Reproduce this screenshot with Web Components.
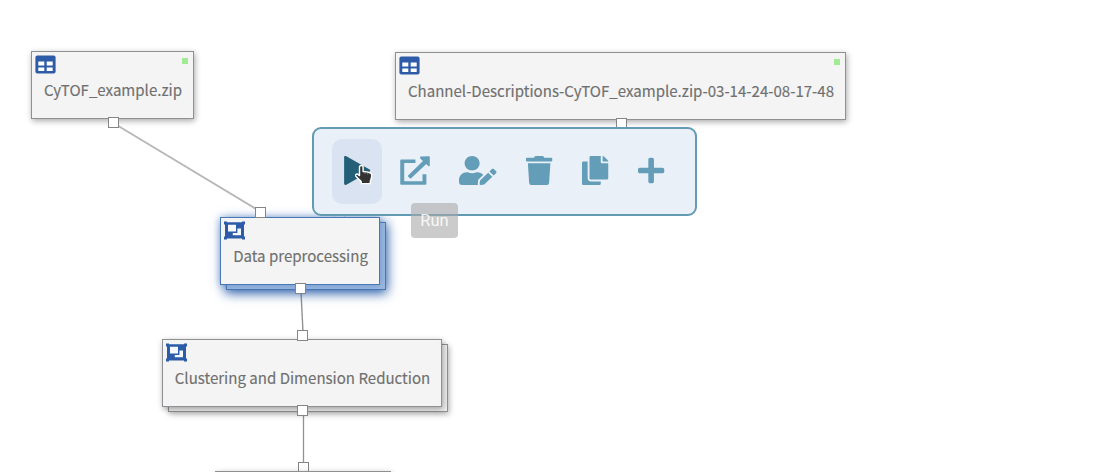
<!DOCTYPE html>
<html lang="en">
<head>
<meta charset="utf-8">
<title>Workflow</title>
<style>
html,body{margin:0;height:100%;overflow:hidden;background:#fff}
</style>
</head>
<body>
<workflow-canvas>
  <workflow-edges></workflow-edges>
  <workflow-node kind="table" status="ready" style="left:31px;top:51px;width:163px">CyTOF_example.zip</workflow-node>
  <workflow-node kind="table" status="ready" style="left:395px;top:52px;width:451px">Channel-Descriptions-CyTOF_example.zip-03-14-24-08-17-48</workflow-node>
  <workflow-port style="left:334px;top:213px;border-color:#dcdccf"></workflow-port>
  <workflow-node kind="group" selected style="left:220px;top:217px;width:160px">Data preprocessing</workflow-node>
  <workflow-node kind="group" style="left:162px;top:339px;width:280px">Clustering and Dimension Reduction</workflow-node>
  <workflow-port style="left:108px;top:117px"></workflow-port>
  <workflow-port style="left:616px;top:118px"></workflow-port>
  <workflow-port style="left:255px;top:207px"></workflow-port>
  <workflow-port style="left:295px;top:283px"></workflow-port>
  <workflow-port style="left:297px;top:330px"></workflow-port>
  <workflow-port style="left:297px;top:405px"></workflow-port>
  <workflow-port style="left:298px;top:462px"></workflow-port>
  <workflow-node kind="table" style="left:215px;top:471px;width:176px"></workflow-node>
  <node-toolbar>
    <tool-button icon="play" active></tool-button>
    <tool-button icon="open"></tool-button>
    <tool-button icon="assign"></tool-button>
    <tool-button icon="trash"></tool-button>
    <tool-button icon="copy"></tool-button>
    <tool-button icon="plus"></tool-button>
  </node-toolbar>
  <tool-tip>Run</tool-tip>
  <hand-pointer></hand-pointer>
</workflow-canvas>
<script>
class Base extends HTMLElement{
  constructor(){super();this.attachShadow({mode:'open'});}
  connectedCallback(){this.shadowRoot.innerHTML=this.render();}
}
customElements.define('workflow-canvas',class extends Base{
  render(){return `<style>:host{display:block;position:relative;width:1100px;height:472px;overflow:hidden;background:#fff}</style><slot></slot>`;}
});
customElements.define('workflow-edges',class extends Base{
  render(){return `<style>:host{position:absolute;inset:0}svg{display:block}</style>
  <svg width="1100" height="472" fill="none" stroke-width="1.6">
    <path d="M115 124L256 209" stroke="#b9b9b9" stroke-width="2"/>
    <path d="M301 292L303 332" stroke="#929292" stroke-width="1.4"/>
    <path d="M303.5 414V463" stroke="#929292" stroke-width="1.3"/>
  </svg>`;}
});
const KIND={
  table:`<svg width="21" height="19" viewBox="0 0 21 19"><rect x=".4" y=".4" width="20.2" height="18" rx="2" fill="#2d5ba8"/><path fill="#fff" d="M3.300 6.500h6v3.900h-6zM11.700 6.500h6v3.900h-6zM3.300 12.600h6v3.400h-6zM11.700 12.600h6v3.400h-6z"/></svg>`,
  group:`<svg width="21" height="19" viewBox="0 0 21 19"><path fill="#2d5ba8" d="M0 .4h3v.8h15v-.8h3v3h-1v12h1v3h-3v-.8H3v.8H0v-3h1v-12H0z"/><path fill="#f4f7fb" d="M4 3.800h8v6.800H4zM13.400 7.400h3.600v6.900H8.800v-2.300h4.600z"/></svg>`
};
customElements.define('workflow-node',class extends Base{
  render(){
    const stack=this.getAttribute('kind')==='group', ready=this.hasAttribute('status');
    return `<style>
    :host{display:block;position:absolute;height:68px;box-sizing:border-box;--line:#8f9094;font-family:"Noto Sans CJK SC","Noto Sans",sans-serif}
    :host([selected]){--line:#4777b5}
    .back,.card{box-sizing:border-box;border:1.500px solid var(--line);width:100%;height:100%}
    .back{position:absolute;left:6px;top:5px;background:#eee;box-shadow:1px 2px 6px #0005}
    :host([selected]) .back{background:#9db9df;box-shadow:0 2px 11px 1px #2458a5}
    .card{position:relative;background:#f4f4f4;padding:3px 4px;box-shadow:1px 2px 6px #0005}
    :host([selected]) .card{box-shadow:0 0 8px #4b7cc0a0}
    .head{display:flex;justify-content:space-between;height:22px}
    .head svg{display:block;margin:-.5px 0 0 -1px}
    i{width:6px;height:6px;margin:3px 1px 0 0;background:#a3ea94}
    .label{text-align:center;font-size:15.050px;line-height:24px;color:#707070;-webkit-text-stroke:.15px #707070;white-space:nowrap;padding:1px 0 0 1px}
    </style>${stack?'<div class="back"></div>':''}
    <div class="card"><div class="head">${KIND[this.getAttribute('kind')]}${ready?'<i></i>':''}</div><div class="label"><slot></slot></div></div>`;}
});
customElements.define('workflow-port',class extends Base{
  render(){return `<style>:host{position:absolute;box-sizing:border-box;width:11px;height:11px;border:1px solid #858585;background:#fff}</style>`;}
});
customElements.define('node-toolbar',class extends Base{
  render(){return `<style>:host{position:absolute;left:312px;top:127px;width:385px;height:89px;box-sizing:border-box;border:2px solid #639bb4;border-radius:9px;background:#eaf0f8;display:flex;align-items:center;gap:5.500px;padding:0 18px}</style><slot></slot>`;}
});
const ICONS={
  play:[448,'<path d="M2 22C2 2 24-2 40 6L438 238c14 10 14 26 0 36L40 506c-16 8-38 4-38-16z"/>'],
  open:[512,'<path d="M496 6c8 0 12 4 12 12v148c0 14-14 18-24 10l-36-34-258 252c-6 6-14 6-20 0l-32-30c-6-6-6-14 0-20L392 90l-42-40c-12-12-12-38 8-40z"/><path d="M264 62v62H72v322h312V320h66v166c0 14-8 22-22 22H26c-14 0-22-8-22-22V84c0-14 8-22 22-22z"/>'],
  assign:[640,'<path d="M224 256c70.700 0 128-57.300 128-128S294.700 0 224 0 96 57.300 96 128s57.300 128 128 128zm89.600 32h-16.700c-22.200 10.200-46.900 16-72.900 16s-50.600-5.800-72.900-16h-16.700C60.200 288 0 348.200 0 422.400V464c0 26.500 21.500 48 48 48h274.900c-2.400-6.800-3.400-14-2.600-21.300l6.800-60.900 1.200-11.100 7.900-7.900 77.300-77.300c-24.500-27.700-60-45.500-99.900-45.500zm45.300 145.300l-6.800 61c-1.100 10.200 7.500 18.800 17.600 17.600l60.900-6.800 137.900-137.900-71.700-71.700-137.900 137.800zM633 268.900L595.100 231c-9.300-9.300-24.500-9.300-33.800 0l-37.800 37.800-4.100 4.100 71.800 71.700 41.800-41.800c9.300-9.400 9.300-24.500 0-33.900z"/>'],
  trash:[448,'<path d="M432 32H312l-9.400-18.700A24 24 0 0 0 281.100 0H166.800a23.720 23.720 0 0 0-21.400 13.300L136 32H16A16 16 0 0 0 0 48v32a16 16 0 0 0 16 16h416a16 16 0 0 0 16-16V48a16 16 0 0 0-16-16zM32 128l21.200 339a48 48 0 0 0 47.900 45h245.800a48 48 0 0 0 47.900-45L416 128z"/>'],
  copy:[448,'<path d="M320 448v40c0 13.255-10.745 24-24 24H24c-13.255 0-24-10.745-24-24V120c0-13.255 10.745-24 24-24h72v296c0 30.879 25.121 56 56 56h168zm0-344V0H152c-13.255 0-24 10.745-24 24v368c0 13.255 10.745 24 24 24h272c13.255 0 24-10.745 24-24V128H344c-13.200 0-24-10.800-24-24zm120.971-31.029L375.029 7.029A24 24 0 0 0 358.059 0H352v96h96v-6.059a24 24 0 0 0-7.029-16.970z"/>'],
  plus:[448,'<path d="M416 208H272V64c0-17.670-14.330-32-32-32h-32c-17.670 0-32 14.330-32 32v144H32c-17.670 0-32 14.330-32 32v32c0 17.670 14.330 32 32 32h144v144c0 17.670 14.330 32 32 32h32c17.670 0 32-14.330 32-32V304h144c17.670 0 32-14.330 32-32v-32c0-17.670-14.330-32-32-32z"/>']
};
customElements.define('tool-button',class extends Base{
  render(){const [w,p]=ICONS[this.getAttribute('icon')];
  return `<style>:host{display:flex;flex:none;align-items:center;box-sizing:border-box;height:65px;padding:0 12px 2px;border-radius:10px;color:#639db8}
  :host([active]){background:#d9e3f2;color:#235f76}svg{display:block;overflow:visible}</style>
  <svg width="${w*30/512}" height="29" preserveAspectRatio="none" viewBox="0 0 ${w} 512" fill="currentColor">${p}</svg>`;}
});
customElements.define('tool-tip',class extends Base{
  render(){return `<style>:host{position:absolute;left:411px;top:203px;width:47px;height:35px;box-sizing:border-box;border-radius:4px;background:#a8a8a899;color:#fffd;font:400 16.500px/35px Roboto,sans-serif;text-align:center}</style><slot></slot>`;}
});
customElements.define('hand-pointer',class extends Base{
  render(){return `<style>:host{position:absolute;left:353px;top:164px}svg{display:block}</style>
  <svg width="21" height="22" viewBox="0 0 21 22"><path d="M6.500 3.300c0-2.400 3.600-2.400 3.600 0v4.200c4 .2 8.700.8 8.700 3.500 0 3.500-.9 4.500-1.500 6.300v2.300H8.300v-1.800C6.500 15.500 4 14 2.700 11.800c-.6-1.700 1.500-2.300 2.600-1.200l1.200 1z" fill="#343333" stroke="#fff" stroke-width="1.400" stroke-linejoin="round"/><path d="M12 8.300v1.800M14.700 8.800v1.600" stroke="#aaa" stroke-width=".6"/></svg>`;}
});
</script>
</body>
</html>
